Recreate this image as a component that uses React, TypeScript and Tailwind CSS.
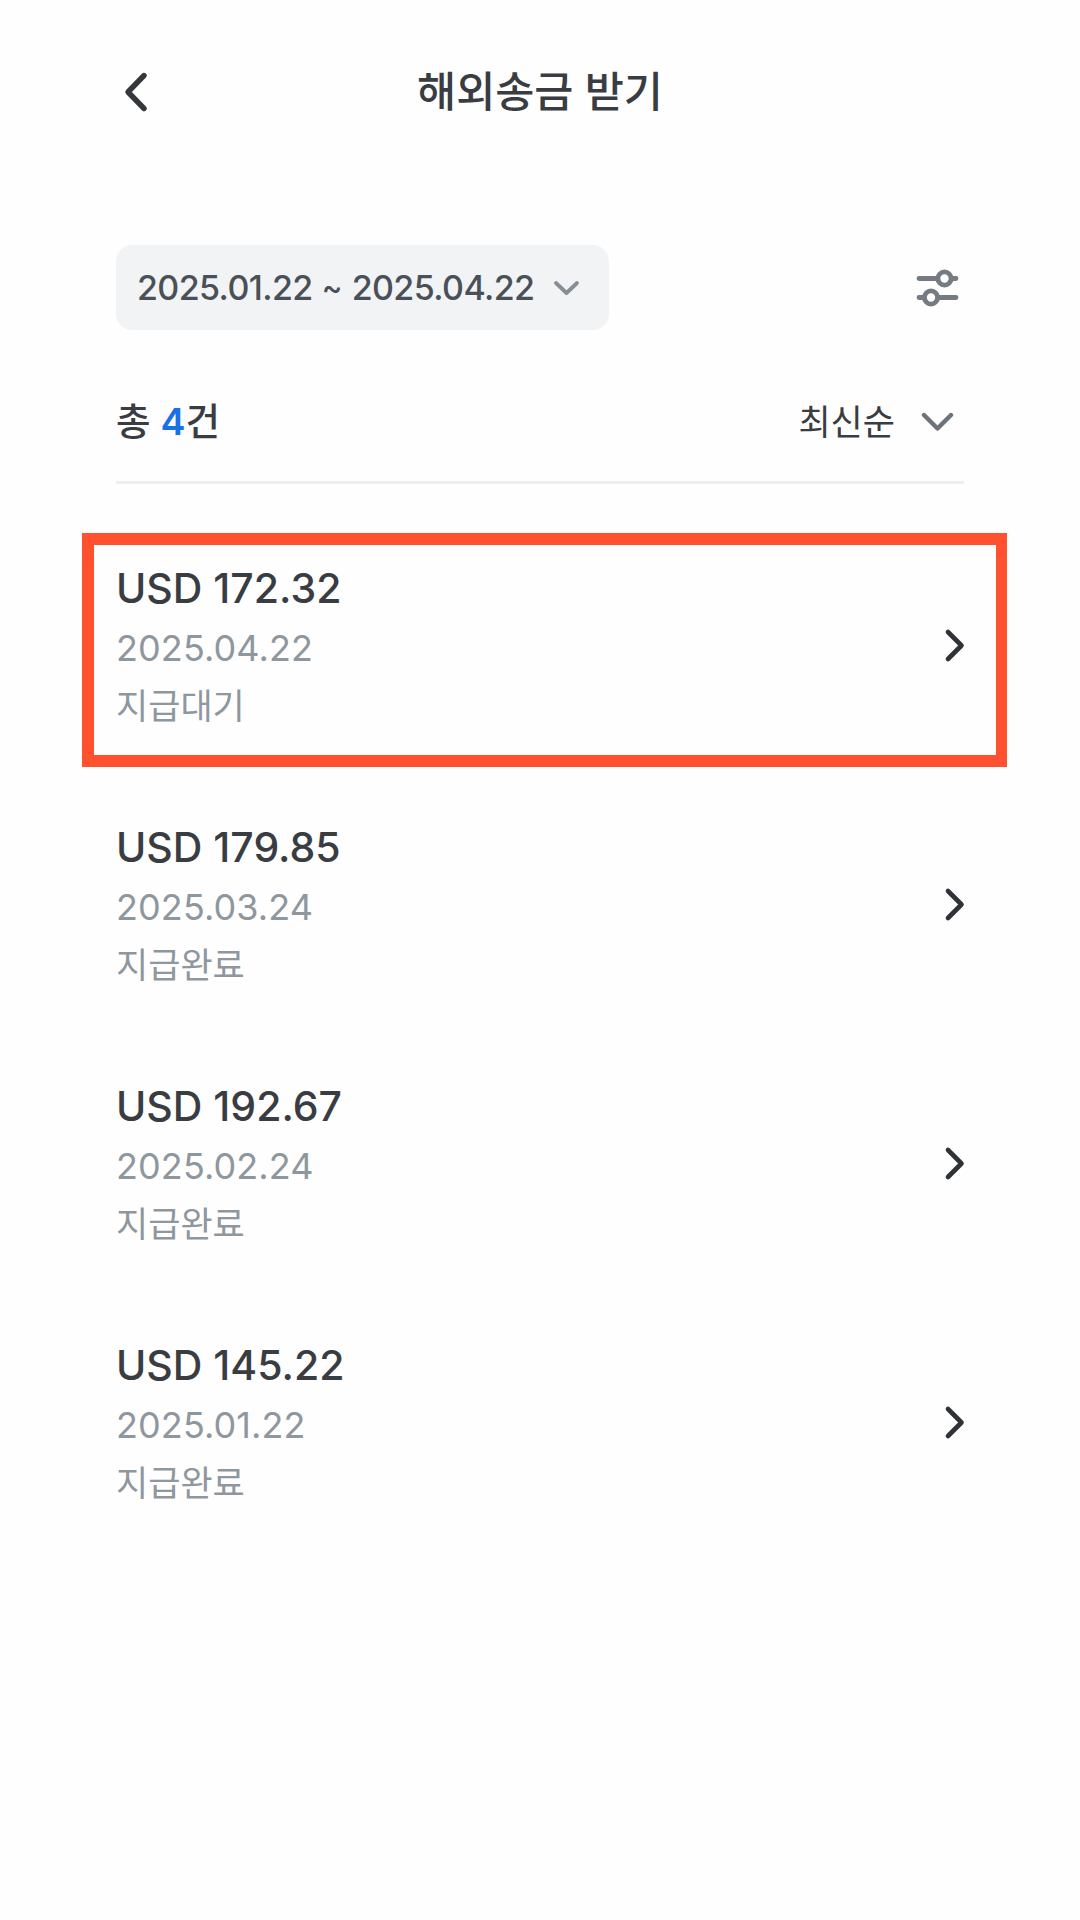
interface Transfer {
  amount: string
  date: string
  status: string
  highlighted?: boolean
}

const transfers: Transfer[] = [
  { amount: "USD 172.32", date: "2025.04.22", status: "지급대기", highlighted: true },
  { amount: "USD 179.85", date: "2025.03.24", status: "지급완료" },
  { amount: "USD 192.67", date: "2025.02.24", status: "지급완료" },
  { amount: "USD 145.22", date: "2025.01.22", status: "지급완료" },
]

function Header() {
  return (
    <header className="flex h-[184px] items-center justify-between px-[116px]">
      <button className="w-10" aria-label="뒤로">
        <svg width="40" height="44" viewBox="0 0 40 44" fill="none" stroke="#34383d" strokeWidth="5.4" strokeLinecap="round" strokeLinejoin="round">
          <path d="M28 5.5 12 22 28 38.5" />
        </svg>
      </button>
      <h1 className="text-[42.5px] font-medium leading-[60px]">해외송금 받기</h1>
      <div className="w-10" />
    </header>
  )
}

function FilterBar() {
  return (
    <div className="mt-[61px] flex items-center justify-between">
      <button className="flex h-[85px] w-[493px] items-center rounded-[16px] bg-[#f1f3f5] pl-[21px] pr-[29px] text-[34px] font-medium tracking-[-0.6px] text-[#495057]">
        <span className="whitespace-nowrap">2025.01.22</span>
        <span className="w-[39px] text-center text-[31px] tracking-normal">~</span>
        <span className="whitespace-nowrap">2025.04.22</span>
        <svg className="ml-auto" width="27" height="18" viewBox="0 0 27 18" fill="none" stroke="#868e96" strokeWidth="3.8" strokeLinecap="round" strokeLinejoin="round">
          <path d="M3 4 13.5 14 24 4" />
        </svg>
      </button>
      <button className="mr-[5px]" aria-label="필터">
        <svg width="43" height="40" viewBox="0 0 43 40" fill="none" stroke="#747b82" strokeWidth="4.8" strokeLinecap="round">
          <path d="M3 10.5h18M36 10.5h4M3 29.5h4M22 29.5h18" />
          <circle cx="28.5" cy="10.5" r="6.6" />
          <circle cx="15" cy="29.5" r="6.6" />
        </svg>
      </button>
    </div>
  )
}

function SummaryBar() {
  return (
    <div className="mt-[51px] flex h-[103px] justify-between border-b-[3px] border-[#eceef0]">
      <p className="pt-[17px] text-[37.5px] font-medium leading-[48px]">
        총 <span className="font-semibold text-[#1971e5]">4</span>건
      </p>
      <button className="mt-[17px] flex h-[48px] items-center gap-[26px] pr-[10px] text-[35px] leading-[48px]">
        <span>최신순</span>
        <svg width="33" height="22" viewBox="0 0 33 22" fill="none" stroke="#6c737a" strokeWidth="4.4" strokeLinecap="round" strokeLinejoin="round">
          <path d="M3 4 16.5 17.5 30 4" />
        </svg>
      </button>
    </div>
  )
}

function TransferRow({ item }: { item: Transfer }) {
  return (
    <li
      className={`flex h-[234px] w-[925px] items-start justify-between border-[12px] border-r-[11px] pl-[22px] pr-[30px] ${
        item.highlighted ? "border-[#ff5030]" : "border-transparent"
      }`}
    >
      <div>
        <p className="mt-[18px] text-[41px] font-medium leading-[50px]">{item.amount}</p>
        <p className="mt-[13px] text-[36px] leading-[44px] tracking-[0.1px] text-[#8f979e]">{item.date}</p>
        <p className="mt-[12px] text-[35px] leading-[48px] text-[#8f979e]">{item.status}</p>
      </div>
      <svg className="mt-[78px]" width="24" height="44" viewBox="0 0 24 44" fill="none" stroke="#2f3338" strokeWidth="4.6" strokeLinecap="round" strokeLinejoin="round">
        <path d="M6 9 19.5 22.5 6 36" />
      </svg>
    </li>
  )
}

export default function App() {
  return (
    <div className="h-[1920px] w-[1080px] overflow-hidden bg-[#fefefe] font-[Inter,'Noto_Sans_CJK_KR',sans-serif] text-[#393d42]">
      <Header />
      <main>
        <div className="mx-[116px]">
          <FilterBar />
          <SummaryBar />
        </div>
        <ul className="mt-[49px] ml-[82px] flex flex-col gap-[25px]">
          {transfers.map((item) => (
            <TransferRow key={item.date} item={item} />
          ))}
        </ul>
      </main>
    </div>
  )
}
